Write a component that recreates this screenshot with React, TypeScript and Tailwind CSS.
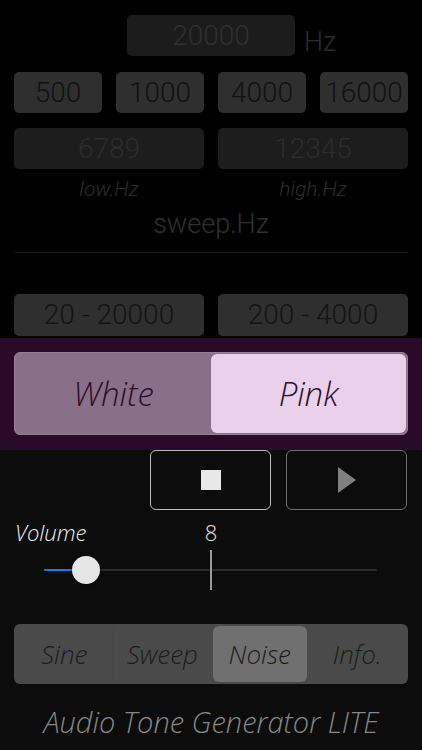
import React from "react";

const NUM = "font-['Roboto','Liberation_Sans',sans-serif] font-light";
const AV = "font-['Open_Sans','Lato',sans-serif] font-[350] italic";

const PRESETS = ["500", "1000", "4000", "16000"];
const TABS = ["Sine", "Sweep", "Noise", "Info."];

export default function App() {
  return (
    <div className="w-[422px] h-[750px] overflow-hidden bg-[#0c0c0c]">
      {/* Réglages de fréquence */}
      <div className="h-[338px] bg-black pt-[15px]">
        <div className="flex pl-[127px]">
          <div className={`flex h-[41px] w-[168px] items-center justify-center rounded-[5px] bg-[#1c1c1c] text-[28px] text-[#303030] ${NUM}`}>
            20000
          </div>
          <span className={`ml-[9px] mt-[12px] text-[27px] leading-[30px] text-[#2c2c2c] ${NUM}`}>Hz</span>
        </div>

        <div className="mt-[15px] grid grid-cols-4 gap-[14px] px-[14px]">
          {PRESETS.map((p) => (
            <div
              key={p}
              className={`flex h-[41px] items-center justify-center rounded-[5px] bg-[#2f2f2f] text-[28px] text-[#111111] ${NUM}`}
            >
              {p}
            </div>
          ))}
        </div>

        <div className="mt-[15px] grid grid-cols-2 gap-[14px] px-[14px]">
          {["6789", "12345"].map((v) => (
            <div
              key={v}
              className={`flex h-[41px] items-center justify-center rounded-[5px] bg-[#1d1d1d] text-[28px] text-[#2c2c2c] ${NUM}`}
            >
              {v}
            </div>
          ))}
        </div>

        <div className="mt-[8px] grid grid-cols-2 gap-[14px] px-[14px] text-center text-[21px] leading-[24px] text-[#2e2e2e] font-['Roboto','Liberation_Sans',sans-serif] font-light italic">
          <span>low.Hz</span>
          <span>high.Hz</span>
        </div>

        <div className={`mt-[7px] text-center text-[27px] leading-[32px] text-[#303030] ${NUM}`}>sweep.Hz</div>

        <div className="mx-[14px] mt-[12px] border-t border-[#1a1a1a]" />

        <div className="mt-[41px] grid grid-cols-2 gap-[14px] px-[14px]">
          {["20 - 20000", "200 - 4000"].map((r) => (
            <div
              key={r}
              className={`flex h-[42px] items-center justify-center rounded-[5px] bg-[#2f2f2f] text-[28px] text-[#141414] ${NUM}`}
            >
              {r}
            </div>
          ))}
        </div>
      </div>

      {/* Type de bruit */}
      <div className="h-[112px] bg-[#2a0a29] px-[14px] pt-[14px]">
        <div className="flex h-[83px] rounded-[6px] border border-[#9a7f99] bg-[#8a6f89] p-[1px]">
          <div className={`flex flex-1 items-center justify-center text-[33px] text-[#2a0f29] ${AV}`}>White</div>
          <div className={`flex flex-1 items-center justify-center rounded-[6px] bg-[#ebd0eb] text-[33px] text-[#2a0f29] ${AV}`}>
            Pink
          </div>
        </div>
      </div>

      {/* Lecture */}
      <div className="flex justify-end gap-[15px] pr-[15px]">
        <button type="button" className="flex h-[60px] w-[121px] items-center justify-center rounded-[6px] border border-[#bdbdbd] bg-[#0c0c0c]">
          <span className="block h-[20px] w-[20px] bg-[#e8e8e8]" />
        </button>
        <button type="button" className="flex h-[60px] w-[121px] items-center justify-center rounded-[6px] border border-[#6e6e6e] bg-[#0c0c0c]">
          <svg width="20" height="26" viewBox="0 0 20 26">
            <path d="M1 0 L19 13 L1 26 Z" fill="#7f7f7f" />
          </svg>
        </button>
      </div>

      {/* Volume */}
      <div className="mt-[9px] flex text-[22px] leading-[26px]">
        <span className={`w-[190px] pl-[15px] text-[#f2f2f2] ${AV}`}>Volume</span>
        <span className="w-[42px] text-center text-[#e6e6e6] font-['Open_Sans','Lato',sans-serif] font-light">8</span>
      </div>

      <div className="relative mt-[5px] h-[40px]">
        <div className="absolute left-[44px] right-[45px] top-[19px] h-[2px] rounded-full bg-[#2a2a2a]">
          <div className="h-[2px] w-[30px] rounded-full bg-[#1a7ae6]" />
        </div>
        <div className="absolute left-[210px] top-0 h-[40px] w-[2px] bg-[#9a9a9a]" />
        <div className="absolute left-[72px] top-[6px] h-[28px] w-[28px] rounded-full bg-[#e6e6e6] shadow-[0_1px_3px_rgba(0,0,0,0.5)]" />
      </div>

      {/* Onglets */}
      <div className="mx-[14px] mt-[34px] grid h-[60px] grid-cols-4 rounded-[6px] bg-[#4a4a4a] p-[2px]">
        {TABS.map((t, i) => (
          <div
            key={t}
            className={`flex items-center justify-center text-[26px] text-[#1c1c1c] ${AV} ${
              i === 2 ? "mx-[2px] rounded-[6px] bg-[#707070]" : ""
            } ${i === 0 ? "border-r border-[#464646]" : ""}`}
          >
            {t}
          </div>
        ))}
      </div>

      <div className={`mt-[20px] text-center text-[29px] leading-[36px] text-[#878787] ${AV}`}>
        Audio Tone Generator LITE
      </div>
    </div>
  );
}
